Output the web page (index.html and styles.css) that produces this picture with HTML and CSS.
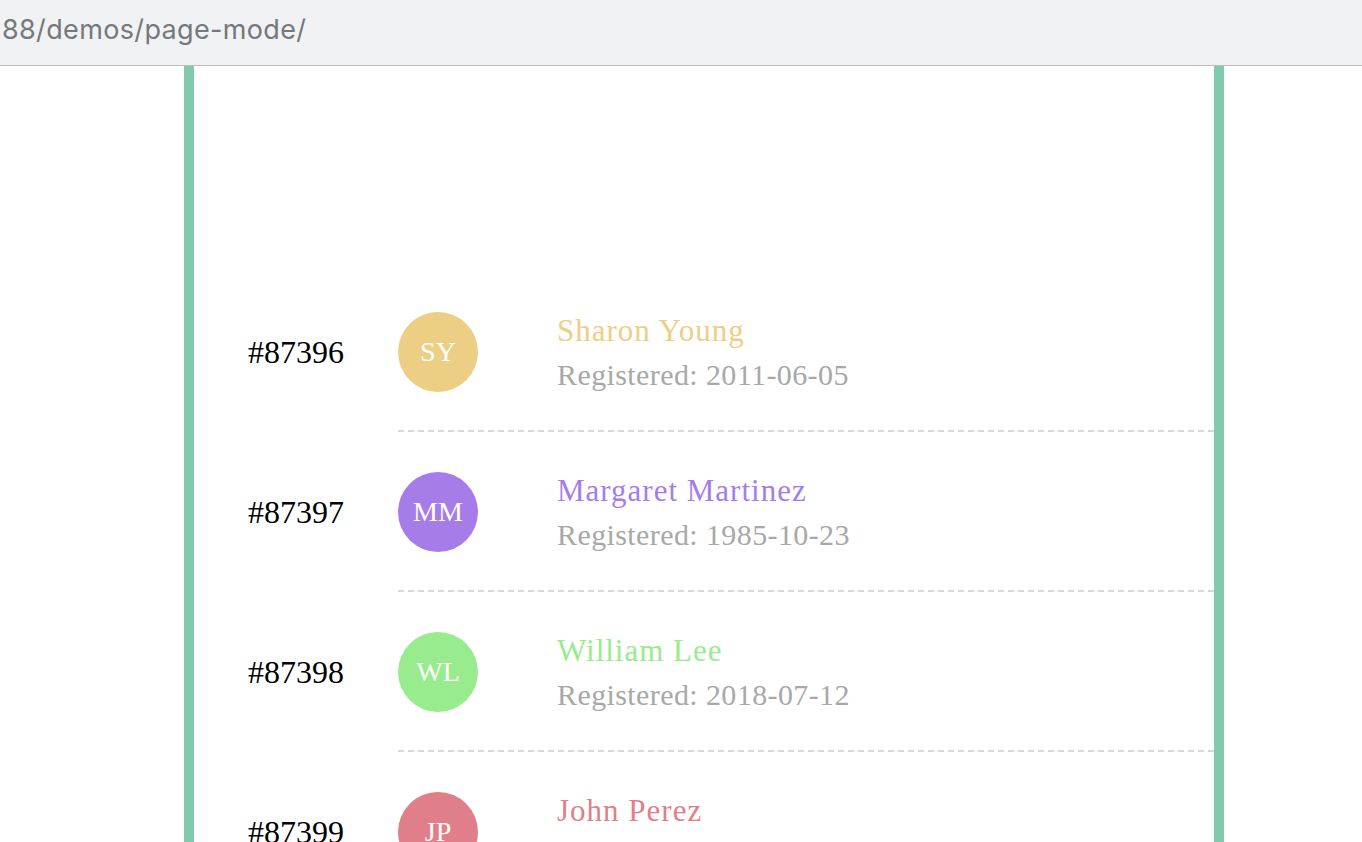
FILE: index.html
```html
<!DOCTYPE html>
<html lang="en">
<head>
<meta charset="utf-8">
<title>page-mode demo</title>
<link rel="stylesheet" href="styles.css">
</head>
<body>
<div class="urlbar"><span class="url">88/demos/page-mode/</span></div>
<div class="page">
  <div class="list">
    <div class="row">
      <div class="index">#87396</div>
      <div class="item">
        <div class="avatar sy">SY</div>
        <div class="info">
          <div class="name sy-text">Sharon Young</div>
          <div class="reg">Registered: 2011-06-05</div>
        </div>
      </div>
    </div>
    <div class="row">
      <div class="index">#87397</div>
      <div class="item">
        <div class="avatar mm">MM</div>
        <div class="info">
          <div class="name mm-text">Margaret Martinez</div>
          <div class="reg">Registered: 1985-10-23</div>
        </div>
      </div>
    </div>
    <div class="row">
      <div class="index">#87398</div>
      <div class="item">
        <div class="avatar wl">WL</div>
        <div class="info">
          <div class="name wl-text">William Lee</div>
          <div class="reg">Registered: 2018-07-12</div>
        </div>
      </div>
    </div>
    <div class="row">
      <div class="index">#87399</div>
      <div class="item">
        <div class="avatar jp">JP</div>
        <div class="info">
          <div class="name jp-text">John Perez</div>
          <div class="reg">Registered: 1994-03-17</div>
        </div>
      </div>
    </div>
  </div>
</div>
</body>
</html>
```
FILE: styles.css
```css
html, body {
  margin: 0;
  padding: 0;
  background: #ffffff;
}
body {
  height: 842px;
  overflow: hidden;
}
.urlbar {
  height: 65px;
  background: #f1f2f4;
  border-bottom: 1px solid #bfbfbf;
  display: flex;
  align-items: center;
  padding-left: 2px;
  box-sizing: content-box;
}
.url {
  font-family: Inter, "Noto Sans", sans-serif;
  font-size: 27px;
  letter-spacing: 0.35px;
  color: #76787b;
  line-height: 1;
  margin-top: -6px;
}
.page {
  margin-left: 184px;
  width: 1020px;
  border-left: 10px solid #81cbad;
  border-right: 10px solid #81cbad;
  min-height: 900px;
}
.list {
  padding-top: 206px;
}
.row {
  display: flex;
  height: 160px;
}
.index {
  width: 204px;
  flex: none;
  display: flex;
  align-items: center;
  justify-content: center;
  font-family: "Liberation Serif", serif;
  font-size: 32px;
  color: #000;
}
.item {
  flex: 1;
  display: flex;
  align-items: center;
  box-sizing: border-box;
  padding: 40px 0 38px;
  border-bottom: 2px dashed #d9d9d9;
}
.avatar {
  width: 80px;
  height: 80px;
  border-radius: 50%;
  flex: none;
  margin-right: 79px;
  display: flex;
  align-items: center;
  justify-content: center;
  color: #ffffff;
  font-family: "Liberation Serif", serif;
  font-size: 28px;
}
.sy { background: #eccf85; }
.mm { background: #a67de8; }
.wl { background: #98ec8e; }
.jp { background: #e07f8a; }
.info {
  display: flex;
  flex-direction: column;
  font-family: "Liberation Serif", serif;
  margin-top: 2px;
}
.name {
  font-size: 31px;
  line-height: 44px;
  letter-spacing: 1px;
}
.reg {
  font-size: 30px;
  line-height: 44px;
  letter-spacing: 0.4px;
  color: #a8a8a8;
}
.sy-text { color: #eccf85; }
.mm-text { color: #a67de8; }
.wl-text { color: #98ec8e; }
.jp-text { color: #e07f8a; }
```
